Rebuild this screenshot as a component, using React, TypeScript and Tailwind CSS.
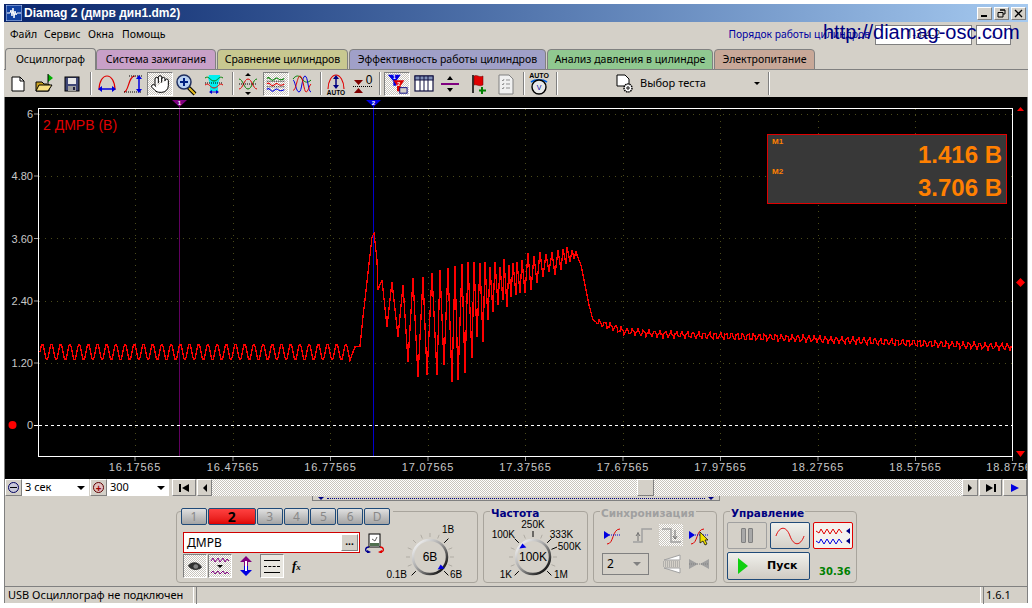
import { Hand } from "lucide-react";
import type { ReactNode } from "react";

const raised = "border border-t-white border-l-white border-r-[#808080] border-b-[#808080] bg-[#d4d0c8]";
const dither = "bg-[repeating-conic-gradient(#c8c4bc_0_25%,#ffffff_0_50%)] bg-[length:2px_2px]";

// traced by hand from the capture, peak / trough pairs of the burst
const burst: [number, number][] = [
  [350, 361], [353, 352], [355, 347], [360, 346], [363, 317], [367, 282], [372, 237], [374, 233], [377, 260], [378, 290],
  [382, 280], [387, 327], [392, 282], [398, 337], [403, 285], [408, 362], [413, 278], [418, 377], [423, 277],
  [427, 375], [432, 273], [437, 375], [440, 270], [444, 365], [448, 268], [452, 382], [455, 266], [458, 380],
  [462, 264], [465, 373], [468, 262], [472, 358], [474, 262], [477, 337], [480, 263], [483, 342], [485, 262],
  [488, 320], [490, 267], [493, 312], [495, 262], [498, 305], [500, 267], [503, 300], [504, 259], [507, 307],
  [509, 265], [511, 297], [513, 263], [516, 295], [517, 262], [520, 293], [522, 260], [525, 293], [528, 253],
  [531, 290], [534, 256], [537, 283], [540, 252], [543, 277], [546, 254], [549, 272], [552, 252], [555, 275],
  [558, 250], [561, 270], [563, 249], [566, 264], [567, 247], [570, 262], [572, 250], [574, 258], [576, 252],
  [578, 258], [581, 265], [585, 285], [589, 305], [593, 320], [596, 322],
];

function tailBase(x: number) {
  const pts = [[596, 322], [607, 325], [623, 331], [657, 334], [723, 336], [787, 338], [1012, 347]];
  for (let i = 1; i < pts.length; i++) {
    if (x <= pts[i][0]) {
      const t = (x - pts[i - 1][0]) / (pts[i][0] - pts[i - 1][0]);
      return pts[i - 1][1] + t * (pts[i][1] - pts[i - 1][1]);
    }
  }
  return 347;
}

function tracePoints() {
  const out: string[] = [];
  for (let x = 40; x < 350; x++) {
    const y = 352 - 8 * Math.cos(((x - 42.3) * 2 * Math.PI) / 9.2);
    out.push(`${x},${y.toFixed(1)}`);
  }
  burst.forEach(([x, y]) => out.push(`${x},${y}`));
  for (let x = 597; x <= 1012; x += 1) {
    const y = tailBase(x) + 2.8 * Math.sin(x * 1.14) + 1.2 * Math.sin(x * 2.9 + 1);
    out.push(`${x},${y.toFixed(1)}`);
  }
  return out.join(" ");
}

function Chart() {
  const ticks = [135, 233, 330.5, 428, 525.5, 623, 720.5, 818, 915.5, 1012.5];
  const labels = ["16.17565", "16.47565", "16.77565", "17.07565", "17.37565", "17.67565", "17.97565", "18.27565", "18.57565", "18.87565"];
  const rows: [number, string][] = [[114, "6"], [176, "4.80"], [238.5, "3.60"], [301, "2.40"], [363, "1.20"]];
  return (
    <svg viewBox="5 97 1022 382" className="block w-[1022px] h-[382px]" fontFamily="'Liberation Sans', sans-serif">
      <rect x="5" y="97" width="1022" height="382" fill="#000" />
      {ticks.slice(0, 9).map((x) => (
        <line key={x} x1={x} x2={x} y1={109} y2={456} stroke="#4a4a1a" strokeDasharray="1 5" shapeRendering="crispEdges" />
      ))}
      {rows.map(([y]) => (
        <line key={y} x1={39} x2={1012} y1={y} y2={y} stroke="#4a4a1a" strokeDasharray="1 5" shapeRendering="crispEdges" />
      ))}
      <line x1={179.5} x2={179.5} y1={104} y2={457} stroke="#800080" strokeOpacity="0.75" shapeRendering="crispEdges" />
      <line x1={373.5} x2={373.5} y1={104} y2={457} stroke="#0000d0" shapeRendering="crispEdges" />
      <line x1={39} x2={1012} y1={425.5} y2={425.5} stroke="#fff" strokeDasharray="3 3" shapeRendering="crispEdges" />
      <rect x="38.5" y="108.5" width="974" height="348" fill="none" stroke="#fff" shapeRendering="crispEdges" />
      <polyline points={tracePoints()} fill="none" stroke="#ff0000" strokeWidth="1.3" shapeRendering="crispEdges" />
      {rows.map(([y, t]) => (
        <g key={t}>
          <line x1={34} x2={38} y1={y} y2={y} stroke="#999" />
          <text x={33} y={y + 4} textAnchor="end" fontSize="11" fill="#c8c8c8">{t}</text>
        </g>
      ))}
      <line x1={34} x2={38} y1={425.5} y2={425.5} stroke="#fff" />
      <text x={33} y={429} textAnchor="end" fontSize="11" fill="#c8c8c8">0</text>
      {ticks.map((x, i) => (
        <g key={x}>
          <line x1={x} x2={x} y1={457} y2={461} stroke="#999" />
          <text x={x} y={471} textAnchor="middle" fontSize="11" letterSpacing="0.8" fill="#c8c8c8">{labels[i]}</text>
        </g>
      ))}
      <text x={43} y={130} fontSize="14" fill="#e00000">2 ДМРВ (В)</text>
      <polygon points="172,100 187,100 179.5,107" fill="#800080" />
      <text x={179.5} y={105} textAnchor="middle" fontSize="6" fontWeight="bold" fill="#fff">1</text>
      <polygon points="366,100 381,100 373.5,107" fill="#0000e0" />
      <text x={373.5} y={105} textAnchor="middle" fontSize="6" fontWeight="bold" fill="#fff">2</text>
      <circle cx="12.5" cy="425" r="4" fill="#ff0000" />
      <polygon points="1017,111 1024,111 1020.5,107" fill="#ff0000" />
      <polygon points="1020.5,278 1025,282.5 1020.5,287 1016,282.5" fill="#ff0000" />
      <polygon points="1016,451 1025,451 1020.5,457" fill="#ff0000" />
    </svg>
  );
}

function Slot({ children, active, className = "" }: { children: ReactNode; active?: boolean; className?: string }) {
  return (
    <div className={`w-[26px] h-[24px] shrink-0 ${active ? `${dither} border border-t-[#808080] border-l-[#808080] border-r-white border-b-white` : ""} ${className}`}>
      {children}
    </div>
  );
}

function Ico({ children }: { children: ReactNode }) {
  return <svg viewBox="0 0 26 24" className="block w-full h-full" fontFamily="'Liberation Sans', sans-serif">{children}</svg>;
}

function Sep({ className = "" }: { className?: string }) {
  return <div className={`w-[2px] h-[23px] shrink-0 border-l border-l-[#808080] border-r border-r-white ${className}`} />;
}

function Toolbar() {
  return (
    <div className="h-[28px] shrink-0 bg-[#d4d0c8] border-t border-[#808080] flex items-center pl-px">
      <Slot><Ico><path d="M7 5h8l4 4v10H7z" fill="#fff" stroke="#000" /><path d="M15 5v4h4" fill="none" stroke="#000" /></Ico></Slot>
      <Slot><Ico>
        <path d="M5 10h6l2 2h5v7H5z" fill="#c8a020" stroke="#000" />
        <path d="M5 19l3-6h13l-4 6z" fill="#f8e080" stroke="#000" />
        <path d="M17 2l5 4-5 4z" fill="#00b000" /><path d="M17 2v9" stroke="#000" />
      </Ico></Slot>
      <Slot className="ml-[2px]"><Ico>
        <rect x="6" y="5" width="14" height="14" fill="#404878" stroke="#000" />
        <rect x="9" y="6" width="8" height="6" fill="#e8e8e8" />
        <rect x="9" y="14" width="8" height="5" fill="#a0a0a0" /><rect x="14" y="15" width="2" height="3" fill="#202040" />
      </Ico></Slot>
      <Sep className="ml-[5px]" />
      <Slot className="ml-px"><Ico>
        <path d="M6 18C6 9 10 4 14 4s8 5 8 14" fill="none" stroke="#e00000" strokeWidth="1.1" />
        <path d="M7 17h14" stroke="#0000e0" strokeWidth="1.5" /><path d="M5 17l4-3v6zM23 17l-4-3v6z" fill="#0000e0" />
      </Ico></Slot>
      <Slot className="ml-[2px]"><Ico>
        <path d="M3 20c5 0 4-16 11-16" fill="none" stroke="#e00000" strokeWidth="1.1" />
        <path d="M8 4h13M3 20h18" stroke="#000" strokeDasharray="1 1" />
        <path d="M18 7v10" stroke="#0000e0" strokeWidth="1.5" /><path d="M18 3l-3 4h6zM18 21l-3-4h6z" fill="#0000e0" />
      </Ico></Slot>
      <Slot active><div className="h-full flex items-center justify-center"><Hand size={20} fill="#fff" stroke="#000" strokeWidth={1.2} /></div></Slot>
      <Slot><Ico>
        <path d="M15 15l7 7" stroke="#000" strokeWidth="4" /><path d="M16 16l6 6" stroke="#e8c020" strokeWidth="2" />
        <circle cx="11" cy="10" r="7" fill="#b8d0f0" stroke="#203060" strokeWidth="1.5" />
        <path d="M7 10h8M11 6v8" stroke="#002080" strokeWidth="2" />
      </Ico></Slot>
      <Slot className="ml-[2px]"><Ico>
        <path d="M8 3h11v3l-2 6v7H9v-7L7 6z" fill="#00f0f0" />
        <path d="M4 6c4-3 5 3 9 3s5-6 9-3" fill="none" stroke="#008000" />
        <path d="M4 11h18" stroke="#000" strokeDasharray="1 1" />
        <path d="M4 13c4-3 5 3 9 3s5-6 9-3" fill="none" stroke="#e00000" />
        <path d="M9 20h8" stroke="#0000d0" /><path d="M8 20l3-2v4zM18 20l-3-2v4z" fill="#0000d0" />
      </Ico></Slot>
      <Sep className="ml-[5px]" />
      <Slot className="ml-px"><Ico>
        <path d="M13 1l-3 3h6zM13 23l-3-3h6z" fill="#000" />
        <path d="M4 7c4 0 5 10 9 10s5-10 9-10" fill="none" stroke="#008000" />
        <path d="M4 17c4 0 5-10 9-10s5 10 9 10" fill="none" stroke="#e00000" />
        <path d="M4 12h18" stroke="#000" strokeDasharray="1 1" />
      </Ico></Slot>
      <Slot active className="ml-[2px]"><Ico>
        <path d="M3 6c3-3 4 2 6 2s4-4 6-2 4 2 7 0" fill="none" stroke="#008000" strokeWidth="1.1" />
        <path d="M3 9h20M3 15h20" stroke="#000" strokeDasharray="1 1" />
        <path d="M3 12c3-3 4 2 6 2s4-4 6-2 4 2 7 0" fill="none" stroke="#e00000" strokeWidth="1.1" />
        <path d="M3 18c3-3 4 2 6 2s4-4 6-2 4 2 7 0" fill="none" stroke="#0000e0" strokeWidth="1.1" />
      </Ico></Slot>
      <Slot><Ico>
        <path d="M4 7c3-4 6-4 9 0s6 4 9 1" fill="none" stroke="#008000" />
        <path d="M4 8c2 0 3 12 6 12s3-16 6-16 3 16 6 16" fill="none" stroke="#0000e0" />
        <path d="M4 18c3 2 4-14 7-14s4 16 6 16 3-6 5-8" fill="none" stroke="#e00000" />
      </Ico></Slot>
      <Sep className="ml-[5px]" />
      <Slot className="ml-px"><Ico>
        <path d="M5 17C5 9 9 3 13 3s8 6 8 14" fill="none" stroke="#e00000" strokeWidth="1.1" />
        <path d="M13 6v8" stroke="#000080" strokeWidth="1.5" /><path d="M13 3l-3 4h6zM13 17l-3-4h6z" fill="#000080" />
        <text x="13" y="23" textAnchor="middle" fontSize="6.5" fontWeight="bold" fill="#000">AUTO</text>
      </Ico></Slot>
      <Slot className="ml-[2px]"><Ico>
        <path d="M3 8h9l-4.500 5zM3 21h9l-4.500-5z" fill="#800000" />
        <path d="M2 14.500h20" stroke="#000" strokeDasharray="1 1" />
        <text x="18" y="12" textAnchor="middle" fontSize="12" fill="#000">0</text>
      </Ico></Slot>
      <Sep className="ml-[2px]" />
      <Slot active className="ml-[3px]"><Ico>
        <path d="M3 2h14l-5 7v5H9V9z" fill="#0000e0" />
        <path d="M9 8h12l-4 6v6h-4v-6z" fill="#e00000" />
        <text x="10" y="7" textAnchor="middle" fontSize="6" fontWeight="bold" fill="#fff">1</text>
        <text x="15" y="14" textAnchor="middle" fontSize="6" fontWeight="bold" fill="#fff">2</text>
        <rect x="16" y="16" width="8" height="6" fill="#d4d0c8" stroke="#000080" />
      </Ico></Slot>
      <Slot className="ml-px"><Ico>
        <rect x="4" y="4" width="18" height="15" fill="#fff" stroke="#101040" strokeWidth="1.2" />
        <rect x="4" y="4" width="18" height="4" fill="#8090b8" stroke="#101040" />
        <path d="M9 4v15M13 4v15M17 4v15" stroke="#101040" />
      </Ico></Slot>
      <Slot><Ico>
        <path d="M4 12h18" stroke="#800080" strokeWidth="2" /><path d="M13 4l-3 4h6zM13 20l-3-4h6z" fill="#000" />
      </Ico></Slot>
      <Slot className="ml-[3px]"><Ico>
        <path d="M7 3v18" stroke="#000" strokeWidth="1.5" />
        <path d="M8 4c3-2 5 2 9 0v9c-4 2-6-1-9 0z" fill="#e00000" stroke="#600000" strokeWidth="0.5" />
        <path d="M16 15v7M13 18.500h7" stroke="#008000" strokeWidth="2" />
      </Ico></Slot>
      <Slot className="ml-px"><Ico>
        <path d="M6 3h10l4 4v15H6z" fill="#f0f0f0" stroke="#808080" />
        <path d="M9 8l1 1 1-2M9 12l1 1 1-2M9 16l1 1 1-2M13 8h4M13 12h4M13 16h4" fill="none" stroke="#909090" />
      </Ico></Slot>
      <Sep className="ml-[4px]" />
      <Slot className="ml-px"><Ico>
        <text x="13" y="6" textAnchor="middle" fontSize="7" fontWeight="bold" fill="#000">AUTO</text>
        <path d="M5 10c4-3 12-3 16 0" fill="none" stroke="#0060e0" strokeWidth="1.6" />
        <circle cx="13" cy="15" r="7" fill="#e8e8e8" stroke="#000" strokeWidth="1.4" />
        <text x="13" y="18" textAnchor="middle" fontSize="7" fill="#0000a0">V</text>
      </Ico></Slot>
      <Sep className="ml-[4px]" />
      <div className="w-[57px] shrink-0" />
      <svg viewBox="0 0 20 20" className="w-[20px] h-[20px] shrink-0">
        <path d="M2 1h8l4 4v7H2z" fill="#fff" stroke="#000" />
        <circle cx="13" cy="14" r="4" fill="#fff" stroke="#000" strokeDasharray="1.500 0.700" strokeWidth="1.5" />
        <circle cx="13" cy="14" r="1.200" fill="none" stroke="#000" />
      </svg>
      <span className="ml-[5px] w-[114px] text-[11px] text-black">Выбор теста</span>
      <span className="w-0 h-0 border-x-[3px] border-x-transparent border-t-[3px] border-t-black" />
      <Sep className="ml-[8px]" />
    </div>
  );
}

const tabs = [
  { label: "Осциллограф", cls: "w-[91px] bg-[#d4d0c8] h-[22px] border-b-0" },
  { label: "Система зажигания", cls: "w-[120px] bg-[#c8a0c8] h-[21px]" },
  { label: "Сравнение цилиндров", cls: "w-[131px] bg-[#c8c890] ml-px h-[21px]" },
  { label: "Эффективность работы цилиндров", cls: "w-[197px] bg-[#a0a0c8] ml-px h-[21px]" },
  { label: "Анализ давления в цилиндре", cls: "w-[166px] bg-[#90c890] ml-px h-[21px]" },
  { label: "Электропитание", cls: "w-[101px] bg-[#c8a898] ml-px h-[21px]" },
];

function Knob({ cx, cy, w, h, value, pointer, marks }: {
  cx: number; cy: number; w: number; h: number; value: string; pointer: number;
  marks: { a: number; t: string; x: number; y: number; anchor?: "start" | "middle" | "end" }[];
}) {
  const ticks: number[] = [];
  for (let a = -135; a <= 135; a += 22.5) ticks.push(a);
  const polar = (a: number, r: number) => {
    const rad = ((a - 90) * Math.PI) / 180;
    return [cx + r * Math.cos(rad), cy + r * Math.sin(rad)];
  };
  const [px, py] = polar(pointer, 15);
  return (
    <svg width={w} height={h} viewBox={`0 0 ${w} ${h}`} className="block" fontFamily="'Liberation Sans', sans-serif">
      <defs>
        <linearGradient id={`ring${cx}`} x1="0" y1="0" x2="1" y2="1">
          <stop offset="0.1" stopColor="#f0f0f0" />
          <stop offset="0.45" stopColor="#a8a8a8" />
          <stop offset="0.9" stopColor="#101010" />
        </linearGradient>
      </defs>
      {ticks.map((a) => {
        const mark = marks.some((m) => m.a === a);
        const [x1, y1] = polar(a, 20);
        const [x2, y2] = polar(a, mark ? 26 : 24);
        return <line key={a} x1={x1} y1={y1} x2={x2} y2={y2} stroke={mark ? "#000" : "#b0aca4"} />;
      })}
      <circle cx={cx} cy={cy} r={17} fill="#d4d0c8" stroke={`url(#ring${cx})`} strokeWidth="2.5" />
      <polygon points={`${px},${py - 3} ${px + 4},${py + 1} ${px - 3},${py + 2}`} fill="#0000e0" />
      <text x={cx} y={cy + 4} textAnchor="middle" fontSize="12" fill="#000">{value}</text>
      {marks.map((m) => (
        <text key={m.t} x={m.x} y={m.y} textAnchor={m.anchor ?? "middle"} fontSize="10" fill="#000">{m.t}</text>
      ))}
    </svg>
  );
}

function Group({ title, titleCls, cls, children }: { title?: string; titleCls?: string; cls: string; children: ReactNode }) {
  return (
    <div className={`relative h-[72px] border border-[#a8a49c] rounded-[4px] shrink-0 ${cls}`}>
      {title && (
        <span className={`absolute left-[6px] -top-[6px] px-px bg-[#d4d0c8] text-[10.5px] leading-[14px] font-bold font-['DejaVu_Sans',sans-serif] ${titleCls}`}>{title}</span>
      )}
      {children}
    </div>
  );
}

function ChannelGroup() {
  const btn = "w-[26px] h-[17px] flex items-center justify-center rounded-[2px] border border-[#1f4a78] bg-gradient-to-b from-[#e0e0e0] to-[#a4a4a4] text-[12px] text-[#888888]";
  return (
    <Group cls="w-[302px] flex">
      <div className="w-[208px] shrink-0">
        <div className="flex gap-px -mt-[4px] ml-[4px] w-[212px] pr-[3px] bg-[#d4d0c8]">
          <div className={btn}>1</div>
          <div className="w-[48px] h-[17px] flex items-center justify-center rounded-[2px] border border-[#1f4a78] bg-gradient-to-b from-[#ff4040] to-[#e00000] text-[14px] font-bold text-black">2</div>
          <div className={btn}>3</div>
          <div className={btn}>4</div>
          <div className={btn}>5</div>
          <div className={btn}>6</div>
          <div className={btn}>D</div>
        </div>
        <div className="flex items-center mt-[7px]">
          <div className="ml-[6px] w-[177px] h-[21px] bg-white border border-[#d00000] flex items-center pl-[3px] pr-px">
            <span className="flex-1 text-[12px] text-black">ДМРВ</span>
            <span className={`w-[17px] h-[17px] flex items-center justify-center text-[10px] font-bold leading-none pb-[3px] ${raised}`}>...</span>
          </div>
          <svg viewBox="0 0 20 20" className="ml-[4px] w-[20px] h-[20px]">
            <rect x="5" y="1" width="11" height="13" fill="#fff" stroke="#000" />
            <rect x="6" y="10" width="9" height="3" fill="#507050" />
            <path d="M8 6l3 2 2-4" fill="none" stroke="#606060" />
            <path d="M5 14c-4 0-5 5 0 5" fill="none" stroke="#000090" strokeWidth="1.3" /><path d="M3 17l4 2-4 2z" fill="#000090" />
            <path d="M16 14c4 0 5 5 0 5" fill="none" stroke="#e00000" strokeWidth="1.3" /><path d="M18 17l-4 2 4 2z" fill="#e00000" />
          </svg>
        </div>
        <div className="flex items-center mt-px ml-[6px]">
          <div className={`w-[24px] h-[24px] flex items-center justify-center border border-t-[#808080] border-l-[#808080] border-r-white border-b-white ${dither}`}>
            <svg viewBox="0 0 20 14" className="w-[16px] h-[11px]"><path d="M1 6c5-6 13-6 18 2-5 5-13 5-18-2z" fill="#303030" /><circle cx="11" cy="7" r="3" fill="#808080" /></svg>
          </div>
          <div className={`ml-px w-[24px] h-[24px] flex items-center justify-center border border-t-[#808080] border-l-[#808080] border-r-white border-b-white ${dither}`}>
            <svg viewBox="0 0 22 22" className="w-[22px] h-[22px]">
              <path d="M2 6l2-3 2 4 3-4 2 4 3-4 2 4 2-3 2 2M2 18l2-2 2 3 3-3 2 3 3-3 2 3 2-2 2 2" fill="none" stroke="#800080" />
              <path d="M8 10h6l-3 3z" fill="#000" />
            </svg>
          </div>
          <svg viewBox="0 0 14 20" className="ml-[7px] w-[14px] h-[20px]">
            <path d="M7 0l6 6H9v4H5V6H1z" fill="#800080" /><path d="M7 20l6-6H9v-4H5v4H1z" fill="#0000e0" /><path d="M6 5h2v10H6z" fill="#fff" />
          </svg>
          <div className="ml-[7px] w-[24px] h-[24px] flex flex-col justify-center gap-[5px] px-[3px] border border-t-[#808080] border-l-[#808080] border-r-white border-b-white bg-[#e8e6e0]">
            <div className="h-px bg-black" /><div className="h-px border-t border-dashed border-black" /><div className="h-px bg-black" />
          </div>
          <span className="ml-[8px] text-[13px] font-bold italic font-['Liberation_Serif',serif] text-black">f<span className="text-[9px]">x</span></span>
        </div>
      </div>
      <div className="mt-[8px]">
        <Knob cx={45} cy={37} w={92} h={62} value="6В" pointer={135}
          marks={[
            { a: 45, t: "1В", x: 63, y: 13 },
            { a: -135, t: "0.1В", x: 22, y: 58, anchor: "end" },
            { a: 135, t: "6В", x: 71, y: 58 },
          ]} />
      </div>
    </Group>
  );
}

function SyncGroup() {
  return (
    <Group title="Синхронизация" titleCls="text-[#a0a0a0]" cls="w-[124px] ml-[5px]">
      <div className="flex items-center mt-[12px] h-[22px]">
        <svg viewBox="0 0 22 22" className="ml-[9px] w-[22px] h-[22px]">
          <path d="M4 20c7 0 5-15 13-15" fill="none" stroke="#e00000" />
          <path d="M4 11h14" stroke="#0000e0" strokeDasharray="1 1" /><path d="M1 7l6 4-6 4z" fill="#0000e0" />
        </svg>
        <svg viewBox="0 0 22 22" className="ml-[7px] w-[22px] h-[22px]">
          <path d="M1 18h9V5h10" fill="none" stroke="#a0a0a0" strokeWidth="1.5" /><path d="M6 8v9M4 12l2-3 2 3" fill="none" stroke="#707070" />
        </svg>
        <div className={`ml-[5px] w-[24px] h-[22px] ${dither}`}>
          <svg viewBox="0 0 24 22" className="w-full h-full">
            <path d="M3 5h9v13h10" fill="none" stroke="#a0a0a0" strokeWidth="1.5" /><path d="M16 6v9M14 12l2 3 2-3" fill="none" stroke="#707070" />
          </svg>
        </div>
        <svg viewBox="0 0 22 22" className="ml-[5px] w-[22px] h-[22px]">
          <path d="M3 20c7 0 5-15 13-15" fill="none" stroke="#e00000" />
          <path d="M3 11h17" stroke="#0000e0" strokeDasharray="1 1" /><path d="M1 7l6 4-6 4z" fill="#0000e0" />
          <path d="M12 8l8 8h-3l2 4-2 1-2-4-3 2z" fill="#f0e000" stroke="#000" strokeWidth="0.7" />
        </svg>
      </div>
      <div className="flex items-center mt-[7px] h-[22px]">
        <div className="ml-[8px] w-[47px] h-[22px] border border-[#808080] flex items-center px-[4px]">
          <span className="flex-1 text-[12px] text-black">2</span>
          <span className="mr-[3px] w-0 h-0 border-x-[4px] border-x-transparent border-t-[4px] border-t-[#808080]" />
        </div>
        <svg viewBox="0 0 22 22" className="ml-[12px] w-[22px] h-[22px]">
          <path d="M3 7l16-5v5zM3 15l16 5v-5z" fill="#fff" stroke="#a0a0a0" />
          <path d="M2 9h18M2 11h18M2 13h18" stroke="#909090" strokeDasharray="1 1" />
        </svg>
        <svg viewBox="0 0 22 22" className="ml-[5px] w-[22px] h-[22px]">
          <path d="M1 6l9 5-9 5zM21 6l-9 5 9 5z" fill="#a0a0a0" /><path d="M1 11h20" stroke="#808080" strokeDasharray="1 1" />
        </svg>
      </div>
    </Group>
  );
}

function ControlGroup() {
  const big = "h-[27px] w-[40px] ml-[3px] rounded-[2px] flex items-center justify-center";
  return (
    <Group title="Управление" titleCls="text-[#000080]" cls="w-[134px] ml-[6px]">
      <div className="flex mt-[10px]">
        <div className={`${big} border border-[#a0a0a0] gap-[2px]`}>
          <div className="w-[5px] h-[15px] bg-[#a8a8a8] border border-[#808080] rounded-[1px]" />
          <div className="w-[5px] h-[15px] bg-[#a8a8a8] border border-[#808080] rounded-[1px]" />
        </div>
        <div className={`${big} border border-[#1f4a78] bg-gradient-to-b from-[#f0f0ec] to-[#d4d0c8]`}>
          <svg viewBox="0 0 32 18" className="w-[30px] h-[18px]"><path d="M1 9c4-11 11-11 15 0s11 11 15 0" fill="none" stroke="#e00000" /></svg>
        </div>
        <div className={`${big} border border-[#e00000] bg-[#f4f2ee]`}>
          <svg viewBox="0 0 36 22" className="w-[36px] h-[22px]">
            <path d="M1 6l3 2 2-4 3 5 3-5 3 5 3-5 3 5 3-5 3 4" fill="none" stroke="#e00000" />
            <path d="M1 16l3 2 2-4 3 5 3-5 3 5 3-5 3 5 3-5 3 4" fill="none" stroke="#0000e0" />
            <path d="M35 3v6l-4-3zM35 13v6l-4-3z" fill="#000080" />
          </svg>
        </div>
      </div>
      <div className="flex items-center mt-[3px]">
        <div className="ml-[3px] w-[83px] h-[28px] flex items-center rounded-[2px] border border-[#1f4a78] bg-gradient-to-b from-[#f0f0ec] to-[#cfcbc3]">
          <svg viewBox="0 0 12 18" className="ml-[9px] w-[12px] h-[18px]"><path d="M1 1l10 8-10 8z" fill="#10d010" /></svg>
          <span className="ml-[18px] text-[11px] font-bold font-['DejaVu_Sans',sans-serif] text-black">Пуск</span>
        </div>
        <span className="ml-[9px] mt-[11px] text-[10px] font-bold font-['DejaVu_Sans',sans-serif] text-[#008000]">30.36</span>
      </div>
    </Group>
  );
}

function ScrollRow() {
  return (
    <div className="h-[17px] shrink-0 flex bg-[#d4d0c8]">
      <div className={`w-[17px] flex items-center justify-center ${raised}`}>
        <span className="w-[11px] h-[11px] rounded-full border border-[#000060] bg-[#c8c8d8] flex items-center justify-center"><span className="w-[7px] h-px bg-black" /></span>
      </div>
      <div className="w-[67px] bg-white flex items-center pl-[3px] pr-[4px] text-[11px] text-black">
        <span className="flex-1">3 сек</span>
        <span className="w-0 h-0 border-x-[4px] border-x-transparent border-t-[4px] border-t-black" />
      </div>
      <div className={`ml-px w-[17px] flex items-center justify-center ${raised}`}>
        <span className="w-[11px] h-[11px] rounded-full border border-[#600000] bg-[#e0c0c0] flex items-center justify-center text-[10px] leading-none font-bold text-[#a00000]">+</span>
      </div>
      <div className="w-[62px] bg-white flex items-center pl-[3px] pr-[4px] text-[11px] text-black">
        <span className="flex-1">300</span>
        <span className="w-0 h-0 border-x-[4px] border-x-transparent border-t-[4px] border-t-black" />
      </div>
      <div className={`ml-[3px] w-[24px] flex items-center justify-center gap-px ${raised}`}>
        <span className="w-[2px] h-[8px] bg-black" />
        <span className="w-0 h-0 border-y-[4px] border-y-transparent border-r-[7px] border-r-black" />
      </div>
      <div className={`ml-px w-[15px] flex items-center justify-center ${raised}`}>
        <span className="w-0 h-0 border-y-[4px] border-y-transparent border-r-[4px] border-r-black" />
      </div>
      <div className={`flex-1 flex ${dither}`}>
        <div className={`ml-[425px] w-[17px] ${raised}`} />
      </div>
      <div className={`w-[16px] flex items-center justify-center ${raised}`}>
        <span className="w-0 h-0 border-y-[4px] border-y-transparent border-l-[4px] border-l-black" />
      </div>
      <div className={`ml-px w-[23px] flex items-center justify-center gap-px ${raised}`}>
        <span className="w-0 h-0 border-y-[4px] border-y-transparent border-l-[7px] border-l-black" />
        <span className="w-[2px] h-[8px] bg-black" />
      </div>
      <div className={`ml-px w-[24px] flex items-center justify-center ${raised}`}>
        <span className="w-0 h-0 border-y-[4px] border-y-transparent border-l-[8px] border-l-[#0000e0]" />
      </div>
    </div>
  );
}

export default function App() {
  return (
    <div className="w-[1032px] h-[608px] bg-white pt-[4px] pl-[4px] font-['Noto_Sans',sans-serif] overflow-hidden">
      <div className="w-[1024px] h-[599px] bg-[#d4d0c8] flex flex-col relative">
        {/* title bar */}
        <div className="h-[18px] shrink-0 flex items-center pl-[2px] pr-[2px] bg-gradient-to-r from-[#0a246a] to-[#a6caf0]">
          <svg viewBox="0 0 16 16" className="w-[16px] h-[16px]">
            <rect width="16" height="16" fill="#1040a0" stroke="#c0d0f0" />
            <path d="M1 8h3l1-3 1 6 1-8 1 10 1-7 1 4 1-2h4" fill="none" stroke="#fff" />
          </svg>
          <span className="ml-[2px] flex-1 text-[12px] leading-none font-bold text-white font-['Liberation_Sans',sans-serif]">Diamag 2 (дмрв дин1.dm2)</span>
          <div className={`w-[15px] h-[13px] flex items-end pl-[3px] pb-[2px] ${raised}`}><span className="w-[6px] h-[2px] bg-black" /></div>
          <div className={`ml-[2px] w-[15px] h-[13px] flex items-center justify-center ${raised}`}>
            <svg viewBox="0 0 9 9" className="w-[9px] h-[9px]"><path d="M3 1h5v4H6M1 3.500h5v4.500H1z" fill="none" stroke="#000" /><path d="M3 1h5M1 3.500h5" stroke="#000" strokeWidth="1.2" /></svg>
          </div>
          <div className={`ml-[2px] w-[15px] h-[13px] flex items-center justify-center ${raised}`}>
            <svg viewBox="0 0 9 9" className="w-[9px] h-[9px]"><path d="M1 1l7 7M8 1l-7 7" stroke="#000" strokeWidth="1.3" /></svg>
          </div>
        </div>

        {/* menu */}
        <div className="h-[26px] shrink-0 flex items-center text-[10.5px] text-black relative">
          <span className="ml-[6px] w-[34px]">Файл</span>
          <span className="w-[44px]">Сервис</span>
          <span className="w-[34px]">Окна</span>
          <span>Помощь</span>
          <div className="ml-auto mr-[17px] flex items-center">
            <span className="text-[10.3px] text-[#0000a0] whitespace-nowrap">Порядок работы цилиндров</span>
            <div className="ml-[5px] w-[97px] h-[20px] bg-white border border-[#808080] flex items-center justify-center text-[#404040]">1-3-4-2</div>
            <div className="ml-[4px] w-[35px] h-[20px] bg-white border border-[#808080] flex items-center justify-center text-[#404040]">↕</div>
          </div>
          <span className="absolute left-[819px] top-[-3px] text-[20px] leading-[26px] whitespace-nowrap text-[#000080] font-['Liberation_Sans',sans-serif]">http://diamag-osc.com</span>
        </div>

        {/* tabs */}
        <div className="h-[22px] shrink-0 flex items-end pl-px -mb-px relative z-10">
          {tabs.map((t) => (
            <div key={t.label} className={`${t.cls} shrink-0 border border-[#808080] rounded-t-[4px] flex items-center justify-center text-[10.5px] text-black whitespace-nowrap`}>
              {t.label}
            </div>
          ))}
        </div>

        <Toolbar />

        {/* chart and everything under it */}
        <div className="flex-1 flex flex-col border-x border-[#808080] min-h-0">
          <div className="relative h-[382px] shrink-0">
            <Chart />
            <div className="absolute left-[762px] top-[37px] w-[240px] h-[70px] bg-[#383838] border border-[#e00000] text-[#ff8000] font-['Liberation_Sans',sans-serif]">
              <span className="absolute left-[4px] top-[1px] text-[8px] font-bold">M1</span>
              <span className="absolute left-[4px] top-[31px] text-[8px] font-bold">M2</span>
              <div className="pr-[4px] pt-[3px] flex flex-col items-end text-[24px] leading-[33px] font-bold">
                <span>1.416 В</span>
                <span>3.706 В</span>
              </div>
            </div>
          </div>

          <ScrollRow />

          <div className="h-[90px] shrink-0">
            <div className="ml-[307px] w-[408px] h-[5px] border border-t-0 border-[#808080] flex items-center justify-between px-[5px]">
              <span className="w-0 h-0 border-x-[3px] border-x-transparent border-t-[3px] border-t-[#000080]" />
              <span className="flex-1 mx-[3px] border-t border-dotted border-[#000080]" />
              <span className="w-0 h-0 border-x-[3px] border-x-transparent border-t-[3px] border-t-[#000080]" />
            </div>
            <div className="flex mt-[10px] pl-[171px]">
              <ChannelGroup />
              <Group title="Частота" titleCls="text-[#000080]" cls="w-[105px] ml-[5px]">
                <Knob cx={49} cy={45} w={103} h={70} value="100K" pointer={-45}
                  marks={[
                    { a: -45, t: "100K", x: 31, y: 26, anchor: "end" },
                    { a: 0, t: "250K", x: 49, y: 16 },
                    { a: 45, t: "333K", x: 77.5, y: 26 },
                    { a: 67.5, t: "500K", x: 85.5, y: 38 },
                    { a: -135, t: "1K", x: 28, y: 66, anchor: "end" },
                    { a: 135, t: "1M", x: 70, y: 66, anchor: "start" },
                  ]} />
              </Group>
              <SyncGroup />
              <ControlGroup />
            </div>
          </div>

          {/* status bar */}
          <div className="flex-1 flex border-t border-[#808080] text-[11px] text-black">
            <div className="w-[189px] pl-[3px] flex items-center border-r border-r-white">USB Осциллограф не подключен</div>
            <div className="ml-[2px] w-[785px] border-l border-[#808080] border-r border-r-white" />
            <div className="ml-[2px] flex-1 pl-[2px] flex items-center border-l border-[#808080]">1.6.1</div>
          </div>
        </div>
      </div>
    </div>
  );
}
